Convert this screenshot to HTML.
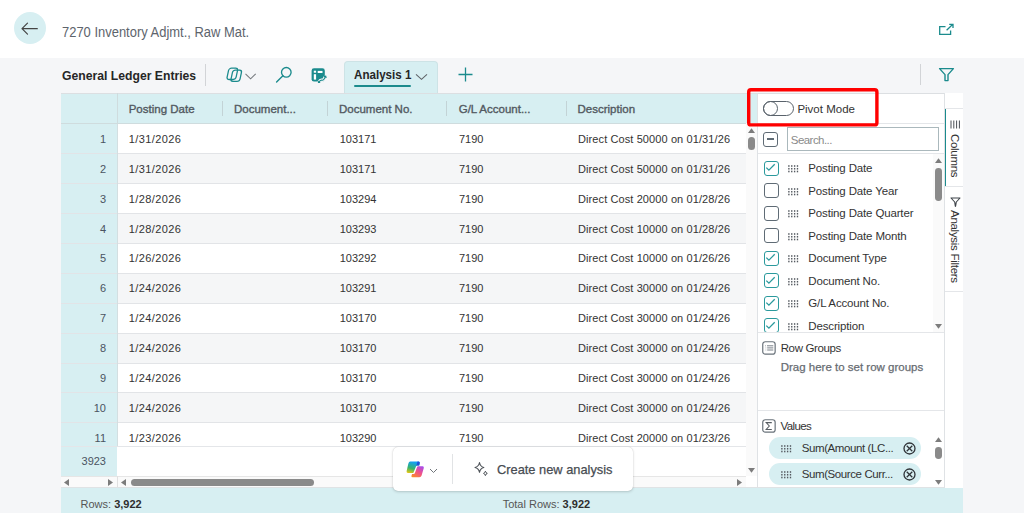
<!DOCTYPE html>
<html><head><meta charset="utf-8">
<style>
*{box-sizing:border-box;margin:0;padding:0}
html,body{width:1024px;height:513px;overflow:hidden;background:#fff;font-family:"Liberation Sans",sans-serif;position:relative}
.abs,.blk,.t{position:absolute}
.t{line-height:1;white-space:nowrap;color:#333}
.rn{font-size:11px;color:#4a5461}
.dt{color:#333}
.ct{color:#333}
.hd{color:#525961;-webkit-text-stroke:0.35px #525961}
.cbx{position:absolute;width:15px;height:15px;border:1.5px solid #5f6b75;border-radius:3px;background:#fff}
.sb{background:#8a8a8a}
</style></head><body>
<div class="blk" style="left:0;top:58px;width:1024px;height:455px;background:#f5f6f8"></div>

<!-- top bar -->
<div class="blk" style="left:13.5px;top:12.2px;width:32px;height:32px;border-radius:50%;background:#d7eff2"></div>
<svg class="abs" style="left:13.4px;top:11.5px" width="33" height="33" viewBox="0 0 33 33"><path d="M9 16.7 H24.3 M14.5 11.2 L9 16.7 L14.5 22.2" fill="none" stroke="#444" stroke-width="1.2" stroke-linecap="round" stroke-linejoin="round"/></svg>
<span class="t " style="left:62px;top:25.30px;font-size:14px;color:#5d646c;transform:scaleX(0.925);transform-origin:0 0">7270 Inventory Adjmt., Raw Mat.</span>
<svg class="abs" style="left:938px;top:23px" width="17" height="13" viewBox="0 0 17 13"><path d="M7.5 3.6 H1.7 V11.4 H12.6 V7.5" fill="none" stroke="#1b8b8d" stroke-width="1.3"/><path d="M8.6 7.2 L14.6 1.6 M11.2 1.3 H15 V5" fill="none" stroke="#1b8b8d" stroke-width="1.3"/></svg>

<!-- toolbar -->
<span class="t " style="left:61.6px;top:69.23px;font-size:13.5px;font-weight:bold;color:#262626;transform:scaleX(0.903);transform-origin:0 0">General Ledger Entries</span>
<div class="blk" style="left:205px;top:64px;width:1px;height:22px;background:#d2d4d7"></div>
<svg class="abs" style="left:226px;top:67px" width="32" height="16" viewBox="0 0 32 16"><g fill="none" stroke="#1b8b8d" stroke-width="1.3"><rect x="3.3" y="1.2" width="9" height="11.3" rx="2.4" transform="skewX(-12)"/><rect x="7.6" y="3.1" width="9" height="11.3" rx="2.4" transform="skewX(-12)"/></g><path d="M19.5 6.8 L24.6 11.8 L29.7 6.8" fill="none" stroke="#75797e" stroke-width="1.05"/></svg>
<svg class="abs" style="left:275px;top:66px" width="18" height="17" viewBox="0 0 18 17"><circle cx="11.3" cy="6.3" r="4.8" fill="none" stroke="#1b8b8d" stroke-width="1.35"/><path d="M7.9 9.8 L1.6 16" stroke="#1b8b8d" stroke-width="1.4" stroke-linecap="round"/></svg>
<svg class="abs" style="left:311px;top:68px" width="16" height="15" viewBox="0 0 16 15"><rect x="0.6" y="0.3" width="13.2" height="13.3" rx="2.4" fill="#1b8b8d"/><rect x="2.8" y="2.7" width="2.3" height="2" fill="#fff"/><rect x="6.7" y="2.9" width="4.8" height="2.1" fill="#fff"/><rect x="2.8" y="6.2" width="2.3" height="5.4" fill="#fff"/><path d="M7.6 14.6 Q9.4 11.6 11 12.2 Q12.6 12.8 14.6 8.6" fill="none" stroke="#f5f6f8" stroke-width="3.4"/><path d="M7.6 14.6 Q9.4 11.6 11 12.2 Q12.6 12.8 14.6 8.6" fill="none" stroke="#1b8b8d" stroke-width="1.1"/><path d="M13 8.6 L14.7 8.2 L15.2 10" fill="none" stroke="#1b8b8d" stroke-width="1.1"/><path d="M7.2 12.8 L7.5 14.6 L9.2 14.3" fill="none" stroke="#1b8b8d" stroke-width="1.1"/></svg>

<div class="blk" style="left:344px;top:61px;width:94px;height:33px;background:#d7eff2;border:1px solid #cde3e6;border-bottom:none;border-radius:4px 4px 0 0"></div>
<span class="t " style="left:354px;top:67.73px;font-size:13.5px;font-weight:bold;color:#262626;transform:scaleX(0.86);transform-origin:0 0">Analysis 1</span>
<div class="blk" style="left:354px;top:84.7px;width:57px;height:2px;background:#1b8b8d;border-radius:1px"></div>
<svg class="abs" style="left:415px;top:73px" width="13" height="8" viewBox="0 0 13 8"><path d="M1 1.3 L6.5 6.3 L12 1.3" fill="none" stroke="#5f6368" stroke-width="1.1"/></svg>
<svg class="abs" style="left:457px;top:66px" width="17" height="17" viewBox="0 0 17 17"><path d="M8.5 1.5 V15.5 M1.5 8.5 H15.5" stroke="#1b8b8d" stroke-width="1.3"/></svg>
<div class="blk" style="left:920px;top:64px;width:1px;height:21px;background:#d2d4d7"></div>
<svg class="abs" style="left:938px;top:67px" width="17" height="15" viewBox="0 0 17 15"><path d="M1.6 1.6 H15.4 L10 7.6 V13.6 H7 V7.6 Z" fill="none" stroke="#1b8b8d" stroke-width="1.4" stroke-linejoin="round"/></svg>

<!-- grid -->
<div class="blk" style="left:61px;top:93px;width:902px;height:395px;background:#fff"></div>
<div class="blk" style="left:61px;top:93px;width:696px;height:30px;background:#d7eff2"></div>
<div class="blk" style="left:61px;top:93px;width:902px;height:1px;background:#dcdfe2"></div>
<div class="blk" style="left:61px;top:123px;width:56px;height:353px;background:#d7eff2"></div>
<div class="blk" style="left:117px;top:93px;width:1px;height:383px;background:#cfdcde"></div>
<div class="blk" style="left:222px;top:101px;width:1px;height:15px;background:#c3d3d6"></div>
<div class="blk" style="left:327px;top:101px;width:1px;height:15px;background:#c3d3d6"></div>
<div class="blk" style="left:446px;top:101px;width:1px;height:15px;background:#c3d3d6"></div>
<div class="blk" style="left:566px;top:101px;width:1px;height:15px;background:#c3d3d6"></div>
<span class="t hd" style="left:128.7px;top:103.52px;font-size:11.5px;letter-spacing:0px">Posting Date</span>
<span class="t hd" style="left:234px;top:103.52px;font-size:11.5px;letter-spacing:0px">Document...</span>
<span class="t hd" style="left:339px;top:103.52px;font-size:11.5px;letter-spacing:0px">Document No.</span>
<span class="t hd" style="left:458.7px;top:103.52px;font-size:11.5px;letter-spacing:0px">G/L Account...</span>
<span class="t hd" style="left:577.5px;top:103.52px;font-size:11.5px;letter-spacing:0px">Description</span>
<div class="blk" style="left:117px;top:123.4px;width:629px;height:30.0px;background:#ffffff"></div>
<div class="blk" style="left:117px;top:153.3px;width:629px;height:30.0px;background:#f5f6f7"></div>
<div class="blk" style="left:117px;top:183.2px;width:629px;height:30.0px;background:#ffffff"></div>
<div class="blk" style="left:117px;top:213.1px;width:629px;height:30.0px;background:#f5f6f7"></div>
<div class="blk" style="left:117px;top:243.0px;width:629px;height:30.0px;background:#ffffff"></div>
<div class="blk" style="left:117px;top:272.9px;width:629px;height:30.0px;background:#f5f6f7"></div>
<div class="blk" style="left:117px;top:302.8px;width:629px;height:30.0px;background:#ffffff"></div>
<div class="blk" style="left:117px;top:332.7px;width:629px;height:30.0px;background:#f5f6f7"></div>
<div class="blk" style="left:117px;top:362.6px;width:629px;height:30.0px;background:#ffffff"></div>
<div class="blk" style="left:117px;top:392.5px;width:629px;height:30.0px;background:#f5f6f7"></div>
<div class="blk" style="left:117px;top:422.4px;width:629px;height:23.6px;background:#ffffff"></div>
<div class="blk" style="left:61px;top:153px;width:685px;height:1px;background:#e2e4e7"></div>
<div class="blk" style="left:61px;top:183px;width:685px;height:1px;background:#e2e4e7"></div>
<div class="blk" style="left:61px;top:213px;width:685px;height:1px;background:#e2e4e7"></div>
<div class="blk" style="left:61px;top:243px;width:685px;height:1px;background:#e2e4e7"></div>
<div class="blk" style="left:61px;top:273px;width:685px;height:1px;background:#e2e4e7"></div>
<div class="blk" style="left:61px;top:303px;width:685px;height:1px;background:#e2e4e7"></div>
<div class="blk" style="left:61px;top:333px;width:685px;height:1px;background:#e2e4e7"></div>
<div class="blk" style="left:61px;top:363px;width:685px;height:1px;background:#e2e4e7"></div>
<div class="blk" style="left:61px;top:392px;width:685px;height:1px;background:#e2e4e7"></div>
<div class="blk" style="left:61px;top:422px;width:685px;height:1px;background:#e2e4e7"></div>
<span class="t rn" style="right:918px;top:133.85px">1</span>
<span class="t dt" style="left:128.7px;top:133.85px;font-size:11px;letter-spacing:0.42px">1/31/2026</span>
<span class="t dt" style="left:339.7px;top:133.85px;font-size:11px;">103171</span>
<span class="t dt" style="left:458.9px;top:133.85px;font-size:11px;">7190</span>
<span class="t dt" style="left:578px;top:133.85px;font-size:11px;letter-spacing:0.1px">Direct Cost 50000 on 01/31/26</span>
<span class="t rn" style="right:918px;top:163.75px">2</span>
<span class="t dt" style="left:128.7px;top:163.75px;font-size:11px;letter-spacing:0.42px">1/31/2026</span>
<span class="t dt" style="left:339.7px;top:163.75px;font-size:11px;">103171</span>
<span class="t dt" style="left:458.9px;top:163.75px;font-size:11px;">7190</span>
<span class="t dt" style="left:578px;top:163.75px;font-size:11px;letter-spacing:0.1px">Direct Cost 50000 on 01/31/26</span>
<span class="t rn" style="right:918px;top:193.65px">3</span>
<span class="t dt" style="left:128.7px;top:193.65px;font-size:11px;letter-spacing:0.42px">1/28/2026</span>
<span class="t dt" style="left:339.7px;top:193.65px;font-size:11px;">103294</span>
<span class="t dt" style="left:458.9px;top:193.65px;font-size:11px;">7190</span>
<span class="t dt" style="left:578px;top:193.65px;font-size:11px;letter-spacing:0.1px">Direct Cost 20000 on 01/28/26</span>
<span class="t rn" style="right:918px;top:223.55px">4</span>
<span class="t dt" style="left:128.7px;top:223.55px;font-size:11px;letter-spacing:0.42px">1/28/2026</span>
<span class="t dt" style="left:339.7px;top:223.55px;font-size:11px;">103293</span>
<span class="t dt" style="left:458.9px;top:223.55px;font-size:11px;">7190</span>
<span class="t dt" style="left:578px;top:223.55px;font-size:11px;letter-spacing:0.1px">Direct Cost 10000 on 01/28/26</span>
<span class="t rn" style="right:918px;top:253.45px">5</span>
<span class="t dt" style="left:128.7px;top:253.45px;font-size:11px;letter-spacing:0.42px">1/26/2026</span>
<span class="t dt" style="left:339.7px;top:253.45px;font-size:11px;">103292</span>
<span class="t dt" style="left:458.9px;top:253.45px;font-size:11px;">7190</span>
<span class="t dt" style="left:578px;top:253.45px;font-size:11px;letter-spacing:0.1px">Direct Cost 10000 on 01/26/26</span>
<span class="t rn" style="right:918px;top:283.35px">6</span>
<span class="t dt" style="left:128.7px;top:283.35px;font-size:11px;letter-spacing:0.42px">1/24/2026</span>
<span class="t dt" style="left:339.7px;top:283.35px;font-size:11px;">103291</span>
<span class="t dt" style="left:458.9px;top:283.35px;font-size:11px;">7190</span>
<span class="t dt" style="left:578px;top:283.35px;font-size:11px;letter-spacing:0.1px">Direct Cost 30000 on 01/24/26</span>
<span class="t rn" style="right:918px;top:313.25px">7</span>
<span class="t dt" style="left:128.7px;top:313.25px;font-size:11px;letter-spacing:0.42px">1/24/2026</span>
<span class="t dt" style="left:339.7px;top:313.25px;font-size:11px;">103170</span>
<span class="t dt" style="left:458.9px;top:313.25px;font-size:11px;">7190</span>
<span class="t dt" style="left:578px;top:313.25px;font-size:11px;letter-spacing:0.1px">Direct Cost 30000 on 01/24/26</span>
<span class="t rn" style="right:918px;top:343.15px">8</span>
<span class="t dt" style="left:128.7px;top:343.15px;font-size:11px;letter-spacing:0.42px">1/24/2026</span>
<span class="t dt" style="left:339.7px;top:343.15px;font-size:11px;">103170</span>
<span class="t dt" style="left:458.9px;top:343.15px;font-size:11px;">7190</span>
<span class="t dt" style="left:578px;top:343.15px;font-size:11px;letter-spacing:0.1px">Direct Cost 30000 on 01/24/26</span>
<span class="t rn" style="right:918px;top:373.05px">9</span>
<span class="t dt" style="left:128.7px;top:373.05px;font-size:11px;letter-spacing:0.42px">1/24/2026</span>
<span class="t dt" style="left:339.7px;top:373.05px;font-size:11px;">103170</span>
<span class="t dt" style="left:458.9px;top:373.05px;font-size:11px;">7190</span>
<span class="t dt" style="left:578px;top:373.05px;font-size:11px;letter-spacing:0.1px">Direct Cost 30000 on 01/24/26</span>
<span class="t rn" style="right:918px;top:402.95px">10</span>
<span class="t dt" style="left:128.7px;top:402.95px;font-size:11px;letter-spacing:0.42px">1/24/2026</span>
<span class="t dt" style="left:339.7px;top:402.95px;font-size:11px;">103170</span>
<span class="t dt" style="left:458.9px;top:402.95px;font-size:11px;">7190</span>
<span class="t dt" style="left:578px;top:402.95px;font-size:11px;letter-spacing:0.1px">Direct Cost 30000 on 01/24/26</span>
<span class="t rn" style="right:918px;top:432.85px">11</span>
<span class="t dt" style="left:128.7px;top:432.85px;font-size:11px;letter-spacing:0.42px">1/23/2026</span>
<span class="t dt" style="left:339.7px;top:432.85px;font-size:11px;">103290</span>
<span class="t dt" style="left:458.9px;top:432.85px;font-size:11px;">7190</span>
<span class="t dt" style="left:578px;top:432.85px;font-size:11px;letter-spacing:0.1px">Direct Cost 20000 on 01/23/26</span>
<div class="blk" style="left:117px;top:123px;width:1px;height:353px;background:#d3dfe1"></div>
<div class="blk" style="left:61px;top:123px;width:696px;height:1px;background:#cfdcde"></div>
<div class="blk" style="left:117px;top:446px;width:629px;height:30px;background:#fff"></div>
<div class="blk" style="left:61px;top:446px;width:56px;height:30px;background:#d7eff2"></div>
<div class="blk" style="left:61px;top:446px;width:685px;height:1px;background:#e4e6e9"></div>
<span class="t rn" style="right:918px;top:456.15px">3923</span>
<!-- v scroll -->
<div class="blk" style="left:746px;top:123px;width:11px;height:353px;background:#fafafa"></div>
<svg class="abs" style="left:748px;top:128px" width="7" height="5"><path d="M0 5 L3.5 0.2 L7 5Z" fill="#7c7c7c"/></svg>
<div class="blk sb" style="left:748px;top:137px;width:7px;height:13px;border-radius:3.5px"></div>
<svg class="abs" style="left:748px;top:467.5px" width="7" height="5"><path d="M0 0 L3.5 4.8 L7 0Z" fill="#7c7c7c"/></svg>
<!-- h scroll -->
<div class="blk" style="left:61px;top:476px;width:685px;height:12px;background:#fafafa;border-top:1px solid #e6e6e6"></div>
<div class="blk" style="left:117px;top:476px;width:1px;height:12px;background:#e0e0e0"></div>
<svg class="abs" style="left:64px;top:478.5px" width="5" height="7"><path d="M5 0 L0 3.5 L5 7Z" fill="#7c7c7c"/></svg>
<svg class="abs" style="left:108px;top:478.5px" width="5" height="7"><path d="M0 0 L5 3.5 L0 7Z" fill="#7c7c7c"/></svg>
<svg class="abs" style="left:121px;top:478.5px" width="5" height="7"><path d="M5 0 L0 3.5 L5 7Z" fill="#7c7c7c"/></svg>
<div class="blk sb" style="left:131px;top:478.5px;width:183px;height:7px;border-radius:3.5px"></div>
<svg class="abs" style="left:737px;top:478.5px" width="5" height="7"><path d="M0 0 L5 3.5 L0 7Z" fill="#7c7c7c"/></svg>
<!-- footer -->
<div class="blk" style="left:61px;top:487px;width:902px;height:1px;background:#dfe3e5"></div>
<div class="blk" style="left:61px;top:488px;width:902px;height:25px;background:#d7eff2"></div>
<span class="t " style="left:80.5px;top:499.25px;font-size:11px;color:#555">Rows: <b style="color:#2e2e2e">3,922</b></span>
<span class="t " style="left:502.7px;top:499.15px;font-size:11px;color:#555">Total Rows: <b style="color:#2e2e2e">3,922</b></span>

<!-- panel -->
<div class="blk" style="left:757px;top:93px;width:187px;height:394px;background:#fff;border-left:1px solid #dfe2e5"></div>
<div class="blk" style="left:757px;top:93px;width:206px;height:1px;background:#dcdfe2"></div>
<div class="blk" style="left:762.6px;top:101px;width:31px;height:15px;border:1px solid #59626b;border-radius:7.5px"></div>
<div class="blk" style="left:762.6px;top:101px;width:15px;height:15px;border:1px solid #59626b;border-radius:50%"></div>
<span class="t " style="left:797.4px;top:103.82px;font-size:11.5px;color:#333">Pivot Mode</span>
<div class="blk" style="left:758px;top:123px;width:186px;height:1px;background:#e4e6e9"></div>
<div class="cbx" style="left:763.4px;top:131.6px"><div class="blk" style="left:2.3px;top:5px;width:7.4px;height:2px;background:#5f6b75"></div></div>
<div class="blk" style="left:786.5px;top:127.3px;width:152.5px;height:23.6px;border:1px solid #aab8bc;background:#fff"></div>
<span class="t " style="left:790.8px;top:134.62px;font-size:11.5px;color:#8a8a8a;letter-spacing:-0.55px">Search...</span>
<div class="blk" style="left:758px;top:153px;width:186px;height:1px;background:#e4e6e9"></div>
<div class="blk" style="left:758px;top:154px;width:186px;height:178px;overflow:hidden">
<div class="blk" style="left:-758px;top:-154px;width:1024px;height:513px">
<div class="cbx" style="left:763.5px;top:160.7px;border-color:#2b9a9d"><svg class="abs" style="left:-1.5px;top:-1.5px" width="15" height="15" viewBox="0 0 15 15"><path d="M3.3 7.6 L5.9 10.2 L11.7 4.3" fill="none" stroke="#2b9a9d" stroke-width="1.3"/></svg></div>
<svg class="abs" style="left:788.3px;top:165.0px" width="11" height="8" viewBox="0 0 11 8"><rect x="0.20" y="0.20" width="1.35" height="1.6" fill="#555a60"/><rect x="0.20" y="2.95" width="1.35" height="1.6" fill="#555a60"/><rect x="0.20" y="5.70" width="1.35" height="1.6" fill="#555a60"/><rect x="3.07" y="0.20" width="1.35" height="1.6" fill="#555a60"/><rect x="3.07" y="2.95" width="1.35" height="1.6" fill="#555a60"/><rect x="3.07" y="5.70" width="1.35" height="1.6" fill="#555a60"/><rect x="5.94" y="0.20" width="1.35" height="1.6" fill="#555a60"/><rect x="5.94" y="2.95" width="1.35" height="1.6" fill="#555a60"/><rect x="5.94" y="5.70" width="1.35" height="1.6" fill="#555a60"/><rect x="8.81" y="0.20" width="1.35" height="1.6" fill="#555a60"/><rect x="8.81" y="2.95" width="1.35" height="1.6" fill="#555a60"/><rect x="8.81" y="5.70" width="1.35" height="1.6" fill="#555a60"/></svg>
<span class="t ct" style="left:808.3px;top:163.12px;font-size:11.5px;letter-spacing:-0.15px">Posting Date</span>
<div class="cbx" style="left:763.5px;top:183.2px"></div>
<svg class="abs" style="left:788.3px;top:187.5px" width="11" height="8" viewBox="0 0 11 8"><rect x="0.20" y="0.20" width="1.35" height="1.6" fill="#555a60"/><rect x="0.20" y="2.95" width="1.35" height="1.6" fill="#555a60"/><rect x="0.20" y="5.70" width="1.35" height="1.6" fill="#555a60"/><rect x="3.07" y="0.20" width="1.35" height="1.6" fill="#555a60"/><rect x="3.07" y="2.95" width="1.35" height="1.6" fill="#555a60"/><rect x="3.07" y="5.70" width="1.35" height="1.6" fill="#555a60"/><rect x="5.94" y="0.20" width="1.35" height="1.6" fill="#555a60"/><rect x="5.94" y="2.95" width="1.35" height="1.6" fill="#555a60"/><rect x="5.94" y="5.70" width="1.35" height="1.6" fill="#555a60"/><rect x="8.81" y="0.20" width="1.35" height="1.6" fill="#555a60"/><rect x="8.81" y="2.95" width="1.35" height="1.6" fill="#555a60"/><rect x="8.81" y="5.70" width="1.35" height="1.6" fill="#555a60"/></svg>
<span class="t ct" style="left:808.3px;top:185.62px;font-size:11.5px;letter-spacing:-0.15px">Posting Date Year</span>
<div class="cbx" style="left:763.5px;top:205.7px"></div>
<svg class="abs" style="left:788.3px;top:210.0px" width="11" height="8" viewBox="0 0 11 8"><rect x="0.20" y="0.20" width="1.35" height="1.6" fill="#555a60"/><rect x="0.20" y="2.95" width="1.35" height="1.6" fill="#555a60"/><rect x="0.20" y="5.70" width="1.35" height="1.6" fill="#555a60"/><rect x="3.07" y="0.20" width="1.35" height="1.6" fill="#555a60"/><rect x="3.07" y="2.95" width="1.35" height="1.6" fill="#555a60"/><rect x="3.07" y="5.70" width="1.35" height="1.6" fill="#555a60"/><rect x="5.94" y="0.20" width="1.35" height="1.6" fill="#555a60"/><rect x="5.94" y="2.95" width="1.35" height="1.6" fill="#555a60"/><rect x="5.94" y="5.70" width="1.35" height="1.6" fill="#555a60"/><rect x="8.81" y="0.20" width="1.35" height="1.6" fill="#555a60"/><rect x="8.81" y="2.95" width="1.35" height="1.6" fill="#555a60"/><rect x="8.81" y="5.70" width="1.35" height="1.6" fill="#555a60"/></svg>
<span class="t ct" style="left:808.3px;top:208.12px;font-size:11.5px;letter-spacing:-0.15px">Posting Date Quarter</span>
<div class="cbx" style="left:763.5px;top:228.2px"></div>
<svg class="abs" style="left:788.3px;top:232.5px" width="11" height="8" viewBox="0 0 11 8"><rect x="0.20" y="0.20" width="1.35" height="1.6" fill="#555a60"/><rect x="0.20" y="2.95" width="1.35" height="1.6" fill="#555a60"/><rect x="0.20" y="5.70" width="1.35" height="1.6" fill="#555a60"/><rect x="3.07" y="0.20" width="1.35" height="1.6" fill="#555a60"/><rect x="3.07" y="2.95" width="1.35" height="1.6" fill="#555a60"/><rect x="3.07" y="5.70" width="1.35" height="1.6" fill="#555a60"/><rect x="5.94" y="0.20" width="1.35" height="1.6" fill="#555a60"/><rect x="5.94" y="2.95" width="1.35" height="1.6" fill="#555a60"/><rect x="5.94" y="5.70" width="1.35" height="1.6" fill="#555a60"/><rect x="8.81" y="0.20" width="1.35" height="1.6" fill="#555a60"/><rect x="8.81" y="2.95" width="1.35" height="1.6" fill="#555a60"/><rect x="8.81" y="5.70" width="1.35" height="1.6" fill="#555a60"/></svg>
<span class="t ct" style="left:808.3px;top:230.62px;font-size:11.5px;letter-spacing:-0.15px">Posting Date Month</span>
<div class="cbx" style="left:763.5px;top:250.7px;border-color:#2b9a9d"><svg class="abs" style="left:-1.5px;top:-1.5px" width="15" height="15" viewBox="0 0 15 15"><path d="M3.3 7.6 L5.9 10.2 L11.7 4.3" fill="none" stroke="#2b9a9d" stroke-width="1.3"/></svg></div>
<svg class="abs" style="left:788.3px;top:255.0px" width="11" height="8" viewBox="0 0 11 8"><rect x="0.20" y="0.20" width="1.35" height="1.6" fill="#555a60"/><rect x="0.20" y="2.95" width="1.35" height="1.6" fill="#555a60"/><rect x="0.20" y="5.70" width="1.35" height="1.6" fill="#555a60"/><rect x="3.07" y="0.20" width="1.35" height="1.6" fill="#555a60"/><rect x="3.07" y="2.95" width="1.35" height="1.6" fill="#555a60"/><rect x="3.07" y="5.70" width="1.35" height="1.6" fill="#555a60"/><rect x="5.94" y="0.20" width="1.35" height="1.6" fill="#555a60"/><rect x="5.94" y="2.95" width="1.35" height="1.6" fill="#555a60"/><rect x="5.94" y="5.70" width="1.35" height="1.6" fill="#555a60"/><rect x="8.81" y="0.20" width="1.35" height="1.6" fill="#555a60"/><rect x="8.81" y="2.95" width="1.35" height="1.6" fill="#555a60"/><rect x="8.81" y="5.70" width="1.35" height="1.6" fill="#555a60"/></svg>
<span class="t ct" style="left:808.3px;top:253.12px;font-size:11.5px;letter-spacing:-0.15px">Document Type</span>
<div class="cbx" style="left:763.5px;top:273.2px;border-color:#2b9a9d"><svg class="abs" style="left:-1.5px;top:-1.5px" width="15" height="15" viewBox="0 0 15 15"><path d="M3.3 7.6 L5.9 10.2 L11.7 4.3" fill="none" stroke="#2b9a9d" stroke-width="1.3"/></svg></div>
<svg class="abs" style="left:788.3px;top:277.5px" width="11" height="8" viewBox="0 0 11 8"><rect x="0.20" y="0.20" width="1.35" height="1.6" fill="#555a60"/><rect x="0.20" y="2.95" width="1.35" height="1.6" fill="#555a60"/><rect x="0.20" y="5.70" width="1.35" height="1.6" fill="#555a60"/><rect x="3.07" y="0.20" width="1.35" height="1.6" fill="#555a60"/><rect x="3.07" y="2.95" width="1.35" height="1.6" fill="#555a60"/><rect x="3.07" y="5.70" width="1.35" height="1.6" fill="#555a60"/><rect x="5.94" y="0.20" width="1.35" height="1.6" fill="#555a60"/><rect x="5.94" y="2.95" width="1.35" height="1.6" fill="#555a60"/><rect x="5.94" y="5.70" width="1.35" height="1.6" fill="#555a60"/><rect x="8.81" y="0.20" width="1.35" height="1.6" fill="#555a60"/><rect x="8.81" y="2.95" width="1.35" height="1.6" fill="#555a60"/><rect x="8.81" y="5.70" width="1.35" height="1.6" fill="#555a60"/></svg>
<span class="t ct" style="left:808.3px;top:275.62px;font-size:11.5px;letter-spacing:-0.15px">Document No.</span>
<div class="cbx" style="left:763.5px;top:295.7px;border-color:#2b9a9d"><svg class="abs" style="left:-1.5px;top:-1.5px" width="15" height="15" viewBox="0 0 15 15"><path d="M3.3 7.6 L5.9 10.2 L11.7 4.3" fill="none" stroke="#2b9a9d" stroke-width="1.3"/></svg></div>
<svg class="abs" style="left:788.3px;top:300.0px" width="11" height="8" viewBox="0 0 11 8"><rect x="0.20" y="0.20" width="1.35" height="1.6" fill="#555a60"/><rect x="0.20" y="2.95" width="1.35" height="1.6" fill="#555a60"/><rect x="0.20" y="5.70" width="1.35" height="1.6" fill="#555a60"/><rect x="3.07" y="0.20" width="1.35" height="1.6" fill="#555a60"/><rect x="3.07" y="2.95" width="1.35" height="1.6" fill="#555a60"/><rect x="3.07" y="5.70" width="1.35" height="1.6" fill="#555a60"/><rect x="5.94" y="0.20" width="1.35" height="1.6" fill="#555a60"/><rect x="5.94" y="2.95" width="1.35" height="1.6" fill="#555a60"/><rect x="5.94" y="5.70" width="1.35" height="1.6" fill="#555a60"/><rect x="8.81" y="0.20" width="1.35" height="1.6" fill="#555a60"/><rect x="8.81" y="2.95" width="1.35" height="1.6" fill="#555a60"/><rect x="8.81" y="5.70" width="1.35" height="1.6" fill="#555a60"/></svg>
<span class="t ct" style="left:808.3px;top:298.12px;font-size:11.5px;letter-spacing:-0.15px">G/L Account No.</span>
<div class="cbx" style="left:763.5px;top:318.2px;border-color:#2b9a9d"><svg class="abs" style="left:-1.5px;top:-1.5px" width="15" height="15" viewBox="0 0 15 15"><path d="M3.3 7.6 L5.9 10.2 L11.7 4.3" fill="none" stroke="#2b9a9d" stroke-width="1.3"/></svg></div>
<svg class="abs" style="left:788.3px;top:322.5px" width="11" height="8" viewBox="0 0 11 8"><rect x="0.20" y="0.20" width="1.35" height="1.6" fill="#555a60"/><rect x="0.20" y="2.95" width="1.35" height="1.6" fill="#555a60"/><rect x="0.20" y="5.70" width="1.35" height="1.6" fill="#555a60"/><rect x="3.07" y="0.20" width="1.35" height="1.6" fill="#555a60"/><rect x="3.07" y="2.95" width="1.35" height="1.6" fill="#555a60"/><rect x="3.07" y="5.70" width="1.35" height="1.6" fill="#555a60"/><rect x="5.94" y="0.20" width="1.35" height="1.6" fill="#555a60"/><rect x="5.94" y="2.95" width="1.35" height="1.6" fill="#555a60"/><rect x="5.94" y="5.70" width="1.35" height="1.6" fill="#555a60"/><rect x="8.81" y="0.20" width="1.35" height="1.6" fill="#555a60"/><rect x="8.81" y="2.95" width="1.35" height="1.6" fill="#555a60"/><rect x="8.81" y="5.70" width="1.35" height="1.6" fill="#555a60"/></svg>
<span class="t ct" style="left:808.3px;top:320.62px;font-size:11.5px;letter-spacing:-0.15px">Description</span>
</div></div>
<div class="blk" style="left:932.5px;top:154px;width:11.5px;height:178px;background:#fafafa"></div>
<svg class="abs" style="left:935px;top:158px" width="7" height="5"><path d="M0 5 L3.5 0.2 L7 5Z" fill="#7c7c7c"/></svg>
<div class="blk sb" style="left:935px;top:167.5px;width:6.8px;height:33.4px;border-radius:3.4px"></div>
<svg class="abs" style="left:935px;top:323.5px" width="7" height="5"><path d="M0 0 L3.5 4.8 L7 0Z" fill="#7c7c7c"/></svg>
<div class="blk" style="left:758px;top:332px;width:186px;height:1px;background:#e4e6e9"></div>
<svg class="abs" style="left:762px;top:340.6px" width="14" height="14" viewBox="0 0 14 14"><rect x="0.75" y="0.75" width="12.4" height="12.4" rx="2.5" fill="none" stroke="#6a737b" stroke-width="1.2"/><path d="M5 4.8 H11.3 M5.2 6.9 H11.3 M5.2 9 H11.3" stroke="#6a737b" stroke-width="0.9"/><path d="M3.2 4.8 H4 M3.6 6.9 H4.2 M3.6 9 H4.2" stroke="#8a9096" stroke-width="0.9"/></svg>
<span class="t " style="left:780.7px;top:342.83px;font-size:11.5px;color:#333;letter-spacing:-0.37px">Row Groups</span>
<span class="t " style="left:780.7px;top:361.73px;font-size:11.5px;color:#676c72;-webkit-text-stroke:0.25px #676c72">Drag here to set row groups</span>
<div class="blk" style="left:758px;top:410px;width:186px;height:1px;background:#e4e6e9"></div>
<svg class="abs" style="left:762px;top:418.5px" width="14" height="14" viewBox="0 0 14 14"><rect x="0.75" y="0.75" width="12.4" height="12.4" rx="2.5" fill="none" stroke="#6a737b" stroke-width="1.2"/><path d="M9.8 3.6 H4.2 L7.3 7 L4.2 10.4 H9.8" fill="none" stroke="#555b61" stroke-width="1.05"/></svg>
<span class="t " style="left:780.5px;top:420.93px;font-size:11.5px;color:#333;letter-spacing:-0.6px">Values</span>
<div class="blk" style="left:769px;top:437px;width:152.3px;height:21.8px;border-radius:11px;background:#d7eff2"></div>
<div class="blk" style="left:769px;top:463.1px;width:152.3px;height:21.9px;border-radius:11px;background:#d7eff2"></div>
<svg class="abs" style="left:781.2px;top:444.8px" width="11" height="8" viewBox="0 0 11 8"><rect x="0.20" y="0.20" width="1.35" height="1.6" fill="#555a60"/><rect x="0.20" y="2.95" width="1.35" height="1.6" fill="#555a60"/><rect x="0.20" y="5.70" width="1.35" height="1.6" fill="#555a60"/><rect x="3.07" y="0.20" width="1.35" height="1.6" fill="#555a60"/><rect x="3.07" y="2.95" width="1.35" height="1.6" fill="#555a60"/><rect x="3.07" y="5.70" width="1.35" height="1.6" fill="#555a60"/><rect x="5.94" y="0.20" width="1.35" height="1.6" fill="#555a60"/><rect x="5.94" y="2.95" width="1.35" height="1.6" fill="#555a60"/><rect x="5.94" y="5.70" width="1.35" height="1.6" fill="#555a60"/><rect x="8.81" y="0.20" width="1.35" height="1.6" fill="#555a60"/><rect x="8.81" y="2.95" width="1.35" height="1.6" fill="#555a60"/><rect x="8.81" y="5.70" width="1.35" height="1.6" fill="#555a60"/></svg>
<svg class="abs" style="left:781.2px;top:470.9px" width="11" height="8" viewBox="0 0 11 8"><rect x="0.20" y="0.20" width="1.35" height="1.6" fill="#555a60"/><rect x="0.20" y="2.95" width="1.35" height="1.6" fill="#555a60"/><rect x="0.20" y="5.70" width="1.35" height="1.6" fill="#555a60"/><rect x="3.07" y="0.20" width="1.35" height="1.6" fill="#555a60"/><rect x="3.07" y="2.95" width="1.35" height="1.6" fill="#555a60"/><rect x="3.07" y="5.70" width="1.35" height="1.6" fill="#555a60"/><rect x="5.94" y="0.20" width="1.35" height="1.6" fill="#555a60"/><rect x="5.94" y="2.95" width="1.35" height="1.6" fill="#555a60"/><rect x="5.94" y="5.70" width="1.35" height="1.6" fill="#555a60"/><rect x="8.81" y="0.20" width="1.35" height="1.6" fill="#555a60"/><rect x="8.81" y="2.95" width="1.35" height="1.6" fill="#555a60"/><rect x="8.81" y="5.70" width="1.35" height="1.6" fill="#555a60"/></svg>
<span class="t " style="left:801.7px;top:443.12px;font-size:11.5px;color:#333;letter-spacing:-0.4px">Sum(Amount (LC...</span>
<span class="t " style="left:801.7px;top:469.23px;font-size:11.5px;color:#333;letter-spacing:-0.4px">Sum(Source Curr...</span>
<svg class="abs" style="left:903px;top:442px" width="13" height="13" viewBox="0 0 13 13"><circle cx="6.5" cy="6.5" r="5.5" fill="none" stroke="#2f3338" stroke-width="1.3"/><path d="M3.7 3.7 L9.3 9.3 M9.3 3.7 L3.7 9.3" stroke="#2f3338" stroke-width="1.25"/></svg>
<svg class="abs" style="left:903px;top:468.2px" width="13" height="13" viewBox="0 0 13 13"><circle cx="6.5" cy="6.5" r="5.5" fill="none" stroke="#2f3338" stroke-width="1.3"/><path d="M3.7 3.7 L9.3 9.3 M9.3 3.7 L3.7 9.3" stroke="#2f3338" stroke-width="1.25"/></svg>
<svg class="abs" style="left:935px;top:437px" width="7" height="5"><path d="M0 5 L3.5 0.2 L7 5Z" fill="#7c7c7c"/></svg>
<div class="blk sb" style="left:935px;top:446.5px;width:6.8px;height:12px;border-radius:3.4px"></div>
<svg class="abs" style="left:935px;top:479.5px" width="7" height="5"><path d="M0 0 L3.5 4.8 L7 0Z" fill="#7c7c7c"/></svg>

<!-- side tabs -->
<div class="blk" style="left:944px;top:93px;width:19px;height:395px;background:#fff;border-left:1px solid #dfe2e5"></div>
<div class="blk" style="left:945px;top:108px;width:18px;height:1px;background:#e4e6e9"></div>
<div class="blk" style="left:944.6px;top:109px;width:1.6px;height:77px;background:#1b8b8d"></div>
<div class="blk" style="left:945px;top:186px;width:18px;height:1px;background:#e4e6e9"></div>
<div class="blk" style="left:945px;top:291px;width:18px;height:1px;background:#e4e6e9"></div>
<svg class="abs" style="left:949.5px;top:119.5px" width="11" height="9" viewBox="0 0 11 9"><path d="M1 0.5 V8.5 M3.8 0.5 V8.5 M6.6 0.5 V8.5 M9.4 0.5 V8.5" stroke="#4a4f55" stroke-width="1"/></svg>
<span class="t" style="left:960px;top:134px;font-size:11.5px;color:#333;letter-spacing:-0.3px;transform:rotate(90deg);transform-origin:0 0">Columns</span>
<svg class="abs" style="left:949.5px;top:196.5px" width="11" height="10" viewBox="0 0 11 10"><path d="M1 1 H10 L6.3 5 L5.6 9.2 Q5.5 9.5 5.3 9.2 L4.7 5 Z" fill="none" stroke="#3f444a" stroke-width="1.1" stroke-linejoin="round"/></svg>
<span class="t" style="left:960px;top:210.3px;font-size:11.5px;color:#333;letter-spacing:-0.28px;transform:rotate(90deg);transform-origin:0 0">Analysis Filters</span>

<!-- red highlight -->
<svg class="abs" style="left:745px;top:86px" width="136" height="43" viewBox="0 0 136 43"><rect x="3.7" y="3.7" width="128.2" height="35.2" rx="2.2" fill="none" stroke="#ff0000" stroke-width="3.4"/></svg>

<!-- popup -->
<div class="blk" style="left:392.5px;top:447px;width:240px;height:44px;background:#fff;border-radius:5px;box-shadow:0 1px 3px rgba(0,0,0,0.16),0 0 1px rgba(0,0,0,0.22)"></div>
<svg class="abs" style="left:405.5px;top:460.5px" width="19" height="17" viewBox="0 0 19 17">
<defs><linearGradient id="g1" x1="0.4" y1="0" x2="0.1" y2="1"><stop offset="0" stop-color="#12a0f3"/><stop offset="0.55" stop-color="#36b46c"/><stop offset="1" stop-color="#f4c70b"/></linearGradient>
<linearGradient id="g2" x1="0.9" y1="0" x2="0.2" y2="1"><stop offset="0" stop-color="#a24cf2"/><stop offset="0.5" stop-color="#f0508c"/><stop offset="1" stop-color="#fa8b2a"/></linearGradient></defs>
<path d="M4.2 0.5 H12.4 Q14.2 0.5 13.7 2.3 L13.2 4.5 H11.1 Q10.3 4.5 10 5.4 L7.3 12.1 H2 Q0.3 12.1 0.6 10.3 L2.3 2.8 Q2.9 0.5 4.2 0.5Z" fill="url(#g1)"/>
<path d="M11.6 0.55 H12.4 Q14.2 0.5 13.7 2.3 L13.2 4.5 H11.2 Q10.4 4.5 10.1 5.3 L11.3 1.3 Q11.5 0.6 11.6 0.55Z" fill="#1e4fd8"/>
<path d="M12 5.2 H16.6 Q18.2 5.2 17.8 6.9 L15.6 14.5 Q15.1 16.3 13.3 16.3 H6.6 Q5 16.3 5.5 14.8 L6.1 12.9 H7.8 Q8.6 12.9 8.9 12 L11.1 6 Q11.4 5.2 12 5.2Z" fill="url(#g2)"/>
</svg>
<svg class="abs" style="left:429px;top:468px" width="9" height="6" viewBox="0 0 9 6"><path d="M1 1 L4.5 4.5 L8 1" fill="none" stroke="#70757a" stroke-width="1"/></svg>
<div class="blk" style="left:452px;top:454px;width:1px;height:30px;background:#e1e3e5"></div>
<svg class="abs" style="left:473px;top:461px" width="17" height="17" viewBox="0 0 17 17"><path d="M6.5 1.5 Q7.3 5.6 10.8 6.5 Q7.3 7.4 6.5 11.3 Q5.7 7.4 2 6.5 Q5.7 5.6 6.5 1.5Z" fill="none" stroke="#4b5056" stroke-width="1.1" stroke-linejoin="round"/><path d="M12.4 10.2 Q12.7 11.8 14.3 12.4 Q12.7 12.9 12.4 14.6 Q12.1 12.9 10.5 12.4 Q12.1 11.8 12.4 10.2Z" fill="none" stroke="#4b5056" stroke-width="1"/></svg>
<span class="t " style="left:496.9px;top:462.72px;font-size:13.5px;color:#474c52;-webkit-text-stroke:0.25px #474c52;transform:scaleX(0.95);transform-origin:0 0">Create new analysis</span>
</body></html>
